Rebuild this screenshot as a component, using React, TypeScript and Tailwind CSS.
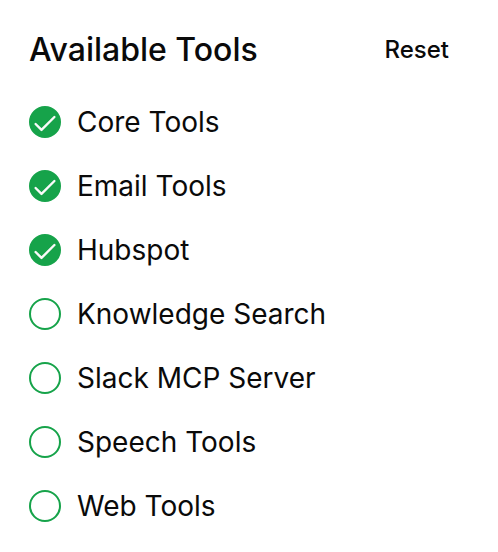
const tools = [
  { name: 'Core Tools', enabled: true },
  { name: 'Email Tools', enabled: true },
  { name: 'Hubspot', enabled: true },
  { name: 'Knowledge Search', enabled: false },
  { name: 'Slack MCP Server', enabled: false },
  { name: 'Speech Tools', enabled: false },
  { name: 'Web Tools', enabled: false },
];

function RoundCheck({ checked }: { checked: boolean }) {
  return (
    <span
      className={`flex size-8 shrink-0 items-center justify-center rounded-full border-2 border-[#16a34a] ${checked ? 'bg-[#16a34a]' : 'bg-white'}`}
    >
      {checked && (
        <svg viewBox="0 0 28 28" className="size-7 shrink-0" fill="none" stroke="#fafafa" strokeWidth="2.4" strokeLinecap="round" strokeLinejoin="round">
          <path d="M23.4 9 10.5 21.9 4.6 16" />
        </svg>
      )}
    </span>
  );
}

export default function App() {
  return (
    <main className="h-[552px] w-[498px] overflow-hidden bg-white pt-[26px] pr-[49px] pl-[29px] font-['Inter',sans-serif] text-[#0a0a0a]">
      <header className="flex h-12 items-center justify-between">
        <h1 className="text-[32px] leading-12 font-medium">Available Tools</h1>
        <button className="text-[24px] leading-8 font-medium">Reset</button>
      </header>
      <ul className="mt-4 flex flex-col">
        {tools.map((tool) => (
          <li key={tool.name} className="flex h-16 items-center gap-4">
            <RoundCheck checked={tool.enabled} />
            <span className="text-[28px] leading-10">{tool.name}</span>
          </li>
        ))}
      </ul>
    </main>
  );
}
